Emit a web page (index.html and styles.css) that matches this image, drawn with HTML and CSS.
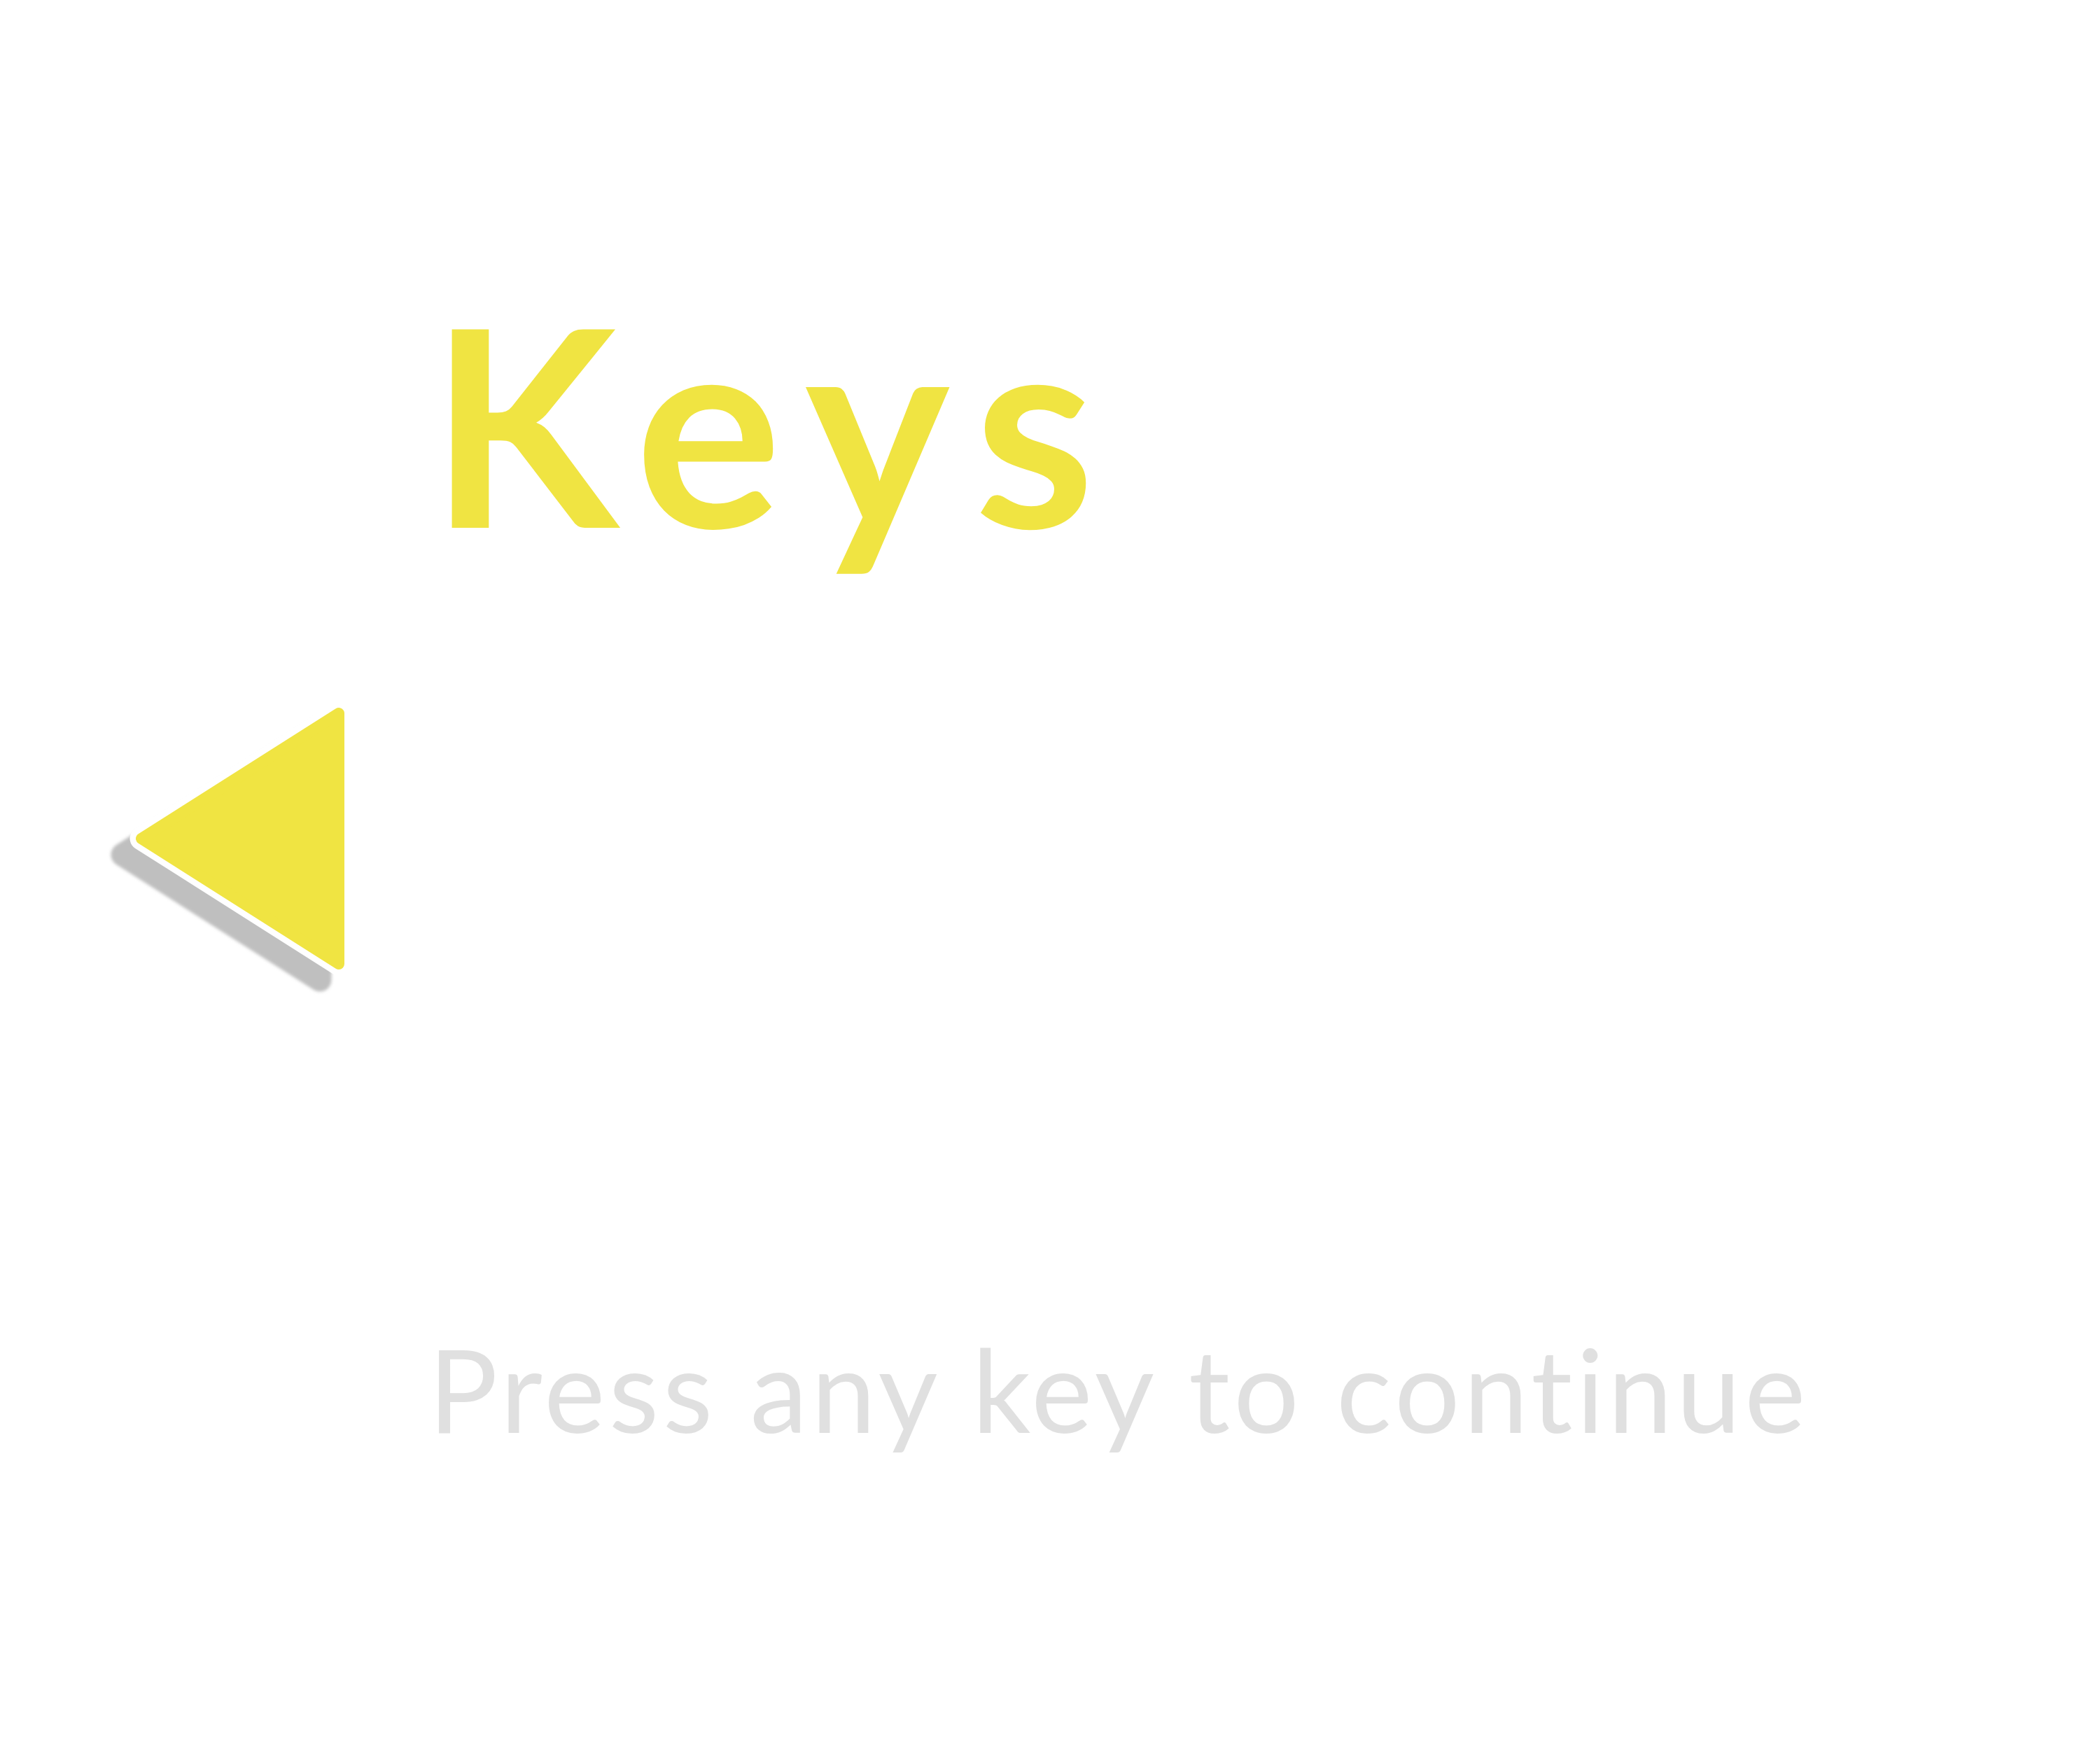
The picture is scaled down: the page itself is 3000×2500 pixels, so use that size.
FILE: index.html
```html
<!DOCTYPE html>
<html lang="en">
<head>
<meta charset="utf-8">
<title>Keys</title>
<link rel="stylesheet" href="styles.css">
</head>
<body>
<main class="screen">
  <h1 class="title">Keys</h1>
  <div class="nav">
    <svg class="back-arrow" width="380" height="450" viewBox="140 990 380 450" xmlns="http://www.w3.org/2000/svg" aria-label="Back">
      <defs>
        <filter id="soft" x="-20%" y="-20%" width="140%" height="140%">
          <feGaussianBlur stdDeviation="2"/>
        </filter>
      </defs>
      <polygon class="arrow-shadow" filter="url(#soft)" points="457,1042 457,1400 175,1221"/>
      <polygon class="arrow-outline" points="484,1019 484,1377 202,1198"/>
      <polygon class="arrow-fill" points="484,1019 484,1377 202,1198"/>
    </svg>
  </div>
  <p class="prompt">Press any key to continue</p>
</main>
</body>
</html>
```

FILE: styles.css
```css
html, body {
  margin: 0;
  padding: 0;
  background: #ffffff;
}

.screen {
  width: 3000px;
  height: 2500px;
  display: flex;
  flex-direction: column;
  align-items: flex-start;
}

.title {
  margin: 402px 0 0 614px;
  font-family: "Lato", "Open Sans", sans-serif;
  font-weight: 700;
  font-size: 392px;
  line-height: 400px;
  letter-spacing: 39px;
  color: #f0e442;
}

.nav {
  margin: 188px 0 0 140px;
  height: 450px;
}

.back-arrow {
  display: block;
}

.arrow-shadow {
  fill: #bfbfbf;
  stroke: #bfbfbf;
  stroke-width: 33;
  stroke-linejoin: round;
}

.arrow-outline {
  fill: #ffffff;
  stroke: #ffffff;
  stroke-width: 33;
  stroke-linejoin: round;
}

.arrow-fill {
  fill: #f0e442;
  stroke: #f0e442;
  stroke-width: 16;
  stroke-linejoin: round;
}

.prompt {
  margin: 443px 0 0 612px;
  font-family: "Lato", "Open Sans", sans-serif;
  font-weight: 400;
  font-size: 165px;
  line-height: 200px;
  letter-spacing: 5.5px;
  color: #e0e0e0;
}
```
